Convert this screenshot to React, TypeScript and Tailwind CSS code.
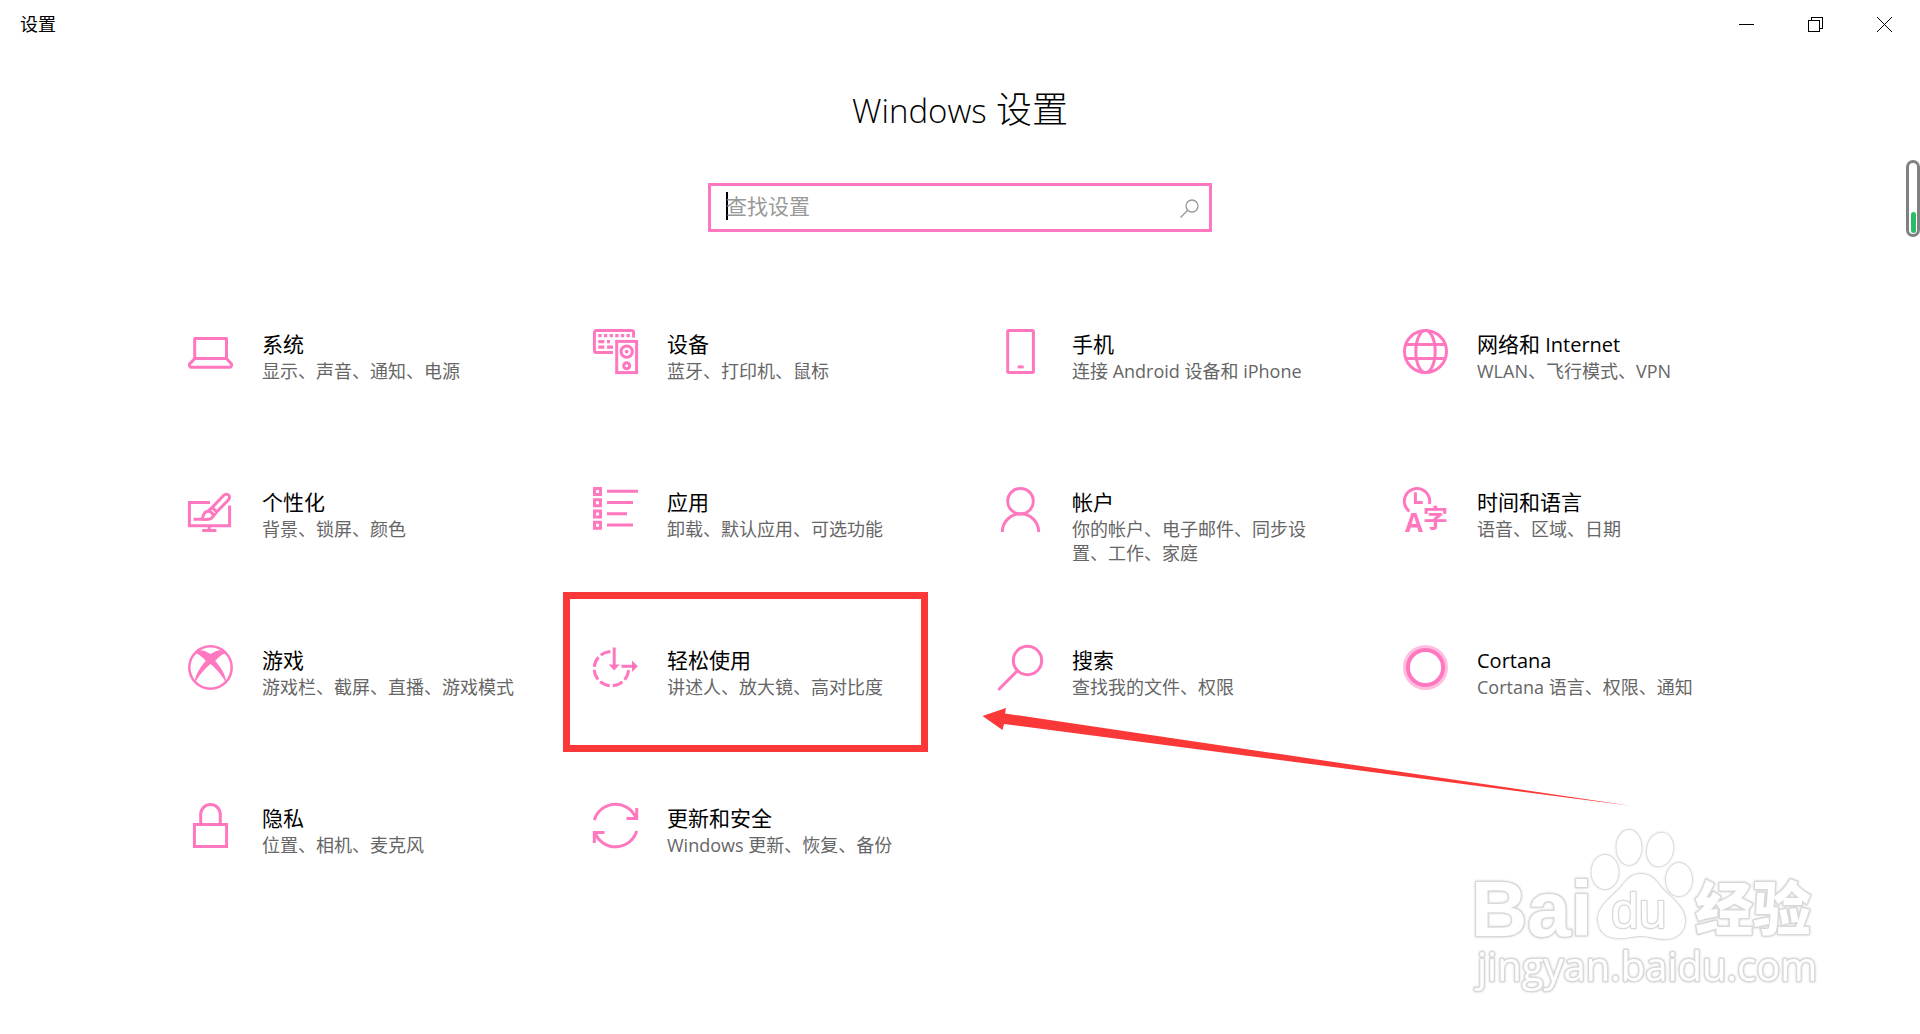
import type { ReactNode } from 'react';

type Category = {
  title: string;
  latin?: string;
  description: string;
  icon: ReactNode;
  highlighted?: boolean;
};

function TileIcon({ children }: { children: ReactNode }) {
  return (
    <svg
      viewBox="0 0 45 45"
      className="size-[45px] shrink-0 overflow-visible text-[#ff77bf]"
      fill="none"
      stroke="currentColor"
      strokeWidth="3"
      aria-hidden="true"
    >
      {children}
    </svg>
  );
}

const categories: Category[] = [
  {
    title: '系统',
    description: '显示、声音、通知、电源',
    icon: (
      <path d="M6.7 29.6V9.4h31.8v20.2M6.7 29.6h31.8l5 5.4c.4 2-.6 3.3-2 3.3H3.5c-1.4 0-2.4-1.3-2-3.3z" strokeLinejoin="round" />
    ),
  },
  {
    title: '设备',
    description: '蓝牙、打印机、鼠标',
    icon: (
      <>
        <path d="M20 23.6H3.4a2 2 0 0 1-2-2V3.4a2 2 0 0 1 2-2h35.2a2 2 0 0 1 2 2v5.1" />
        <path d="M5.3 6.7h32" strokeWidth="3.2" strokeDasharray="3.3 2.35" />
        <path d="M5.3 12.7h6M14 12.7h3M5.3 18.2h6M14 18.2h6" strokeWidth="3.2" />
        <rect x="23.7" y="12.4" width="19.9" height="31.2" />
        <circle cx="33.7" cy="22.6" r="5.7" />
        <circle cx="33.7" cy="22.6" r="1.9" fill="currentColor" stroke="none" />
        <circle cx="33.7" cy="36.7" r="3" />
      </>
    ),
  },
  {
    title: '手机',
    description: '连接 Android 设备和 iPhone',
    icon: (
      <>
        <rect x="9.7" y="1.4" width="25.7" height="42.2" rx="1" />
        <path d="M19.7 37.9h6" />
      </>
    ),
  },
  {
    title: '网络和',
    latin: 'Internet',
    description: 'WLAN、飞行模式、VPN',
    icon: (
      <>
        <circle cx="22.5" cy="22.5" r="21" />
        <ellipse cx="22.5" cy="22.5" rx="9.7" ry="21" />
        <path d="M2.5 15.4h40M2.5 29.5h40" />
      </>
    ),
  },
  {
    title: '个性化',
    description: '背景、锁屏、颜色',
    icon: (
      <>
        <path d="M22 15.4H1.4v23.4h40.2V18.5M21.2 39v5M14.2 43.6h14.2" />
        <path d="M24.2 20.4 35.8 8.2a3.3 3.3 0 0 1 4.8 4.6L28.6 25M24.2 20.4l4.4 4.6M24.2 20.4l-4 3.6M28.6 25l-3.4 4.2" />
        <path d="M5.5 32.3h8.2c1.5-1.6 1.3-6.2 4.6-7.6 4-1.4 7.4 1.8 6.6 4.8-1 3.2-5.4 3.4-11.2 2.8" />
      </>
    ),
  },
  {
    title: '应用',
    description: '卸载、默认应用、可选功能',
    icon: (
      <>
        <path d="M1.5 1.5h6v6h-6zM1.5 12.7h6v6h-6zM1.5 24h6v6h-6zM1.5 35.2h6v6h-6z" />
        <path d="M14 4.3h31M14 15.5h26M14 26.8h20M14 38h26" />
      </>
    ),
  },
  {
    title: '帐户',
    description: '你的帐户、电子邮件、同步设置、工作、家庭',
    icon: (
      <>
        <circle cx="22.5" cy="14.2" r="12.8" />
        <path d="M4.3 45a18.2 18.2 0 0 1 36.4 0" />
      </>
    ),
  },
  {
    title: '时间和语言',
    description: '语音、区域、日期',
    icon: (
      <>
        <path d="M6.4 24.4A12.7 12.7 0 1 1 26.4 17" />
        <path d="M12.4 5.3v10.2h7.4" />
        <g
          fill="currentColor"
          stroke="none"
          className="font-['Open_Sans','Noto_Sans_CJK_SC',sans-serif] font-bold"
        >
          <text x="2" y="45" fontSize="26">A</text>
          <text x="20" y="40" fontSize="25">字</text>
        </g>
      </>
    ),
  },
  {
    title: '游戏',
    description: '游戏栏、截屏、直播、游戏模式',
    icon: (
      <>
        <circle cx="22.5" cy="22.5" r="21.2" strokeWidth="2.5" />
        <path
          d="M7 37.5C6.5 31 13 21 17.8 15.800 14.5 12 11 9 7.5 8.2 9 6 12 5 14.500 5.5c3 .5 5.5 2 8 3.6 2.5-1.6 5-3.1 8-3.6C33 5 36 6 37.5 8.2 34 9 30.5 12 27.2 15.8 32 21 38.5 31 38 37.5 34 30.5 28 23.5 22.5 19 17 23.5 11 30.5 7 37.5z"
          fill="currentColor"
          stroke="none"
        />
      </>
    ),
  },
  {
    title: '轻松使用',
    description: '讲述人、放大镜、高对比度',
    highlighted: true,
    icon: (
      <>
        <path
          d="M35.6 23.6A17.2 17.2 0 1 1 18.4 6.4"
          strokeDasharray="10.5 3"
          strokeDashoffset="-1.5"
        />
        <path d="M21.2 2.5V21M28.5 21.2H40" />
        <path d="M15.7 19.5h11l-5.5 6zM39 15.4v11.6l6-5.8z" fill="currentColor" stroke="none" />
      </>
    ),
  },
  {
    title: '搜索',
    description: '查找我的文件、权限',
    icon: (
      <>
        <circle cx="29.5" cy="15.5" r="14.2" />
        <path d="M19.5 25.5 1.2 44" strokeLinecap="round" />
      </>
    ),
  },
  {
    title: '',
    latin: 'Cortana',
    description: 'Cortana 语言、权限、通知',
    icon: (
      <>
        <circle cx="22.5" cy="22.5" r="20.8" strokeWidth="3.4" stroke="#ffbde0" />
        <circle cx="22.5" cy="22.5" r="17.6" strokeWidth="4" />
      </>
    ),
  },
  {
    title: '隐私',
    description: '位置、相机、麦克风',
    icon: <path d="M6.4 21.4h32.2v22.2H6.4zM12.7 21V11.3a9.8 9.8 0 0 1 19.6 0V21" />,
  },
  {
    title: '更新和安全',
    description: 'Windows 更新、恢复、备份',
    icon: (
      <>
        <path d="M1.3 17A22 22 0 0 1 43 15.4M43.7 5v10.6H33.5" />
        <path d="M43.7 28A22 22 0 0 1 2 29.6M1.3 40V29.4H11.5" />
      </>
    ),
  },
];

function TitleBar() {
  const button = 'flex h-12 w-[69px] items-center justify-center hover:bg-gray-100';
  return (
    <header className="flex h-12 items-center justify-between pr-px pl-5">
      <span className="text-lg leading-6">设置</span>
      <div className="flex">
        <button type="button" aria-label="最小化" className={button}>
          <svg width="15" height="15" stroke="black" shapeRendering="crispEdges">
            <path d="M0 7.5h15" />
          </svg>
        </button>
        <button type="button" aria-label="还原" className={button}>
          <svg width="15" height="15" fill="none" stroke="black" shapeRendering="crispEdges">
            <path d="M.5 3.5h11v11H.5zM3.5 3.5v-3h11v11h-3" />
          </svg>
        </button>
        <button type="button" aria-label="关闭" className={button}>
          <svg width="15" height="15" stroke="black">
            <path d="m0 0 15 15M15 0 0 15" />
          </svg>
        </button>
      </div>
    </header>
  );
}

function SearchBox() {
  return (
    <label className="mx-auto mt-[49px] flex h-[49px] w-[504px] max-w-full items-center border-3 border-[#ff77bf] pr-[10px] pb-[3px] pl-[15px]">
      <span className="h-7 w-0.5 shrink-0 bg-black" />
      <input
        type="text"
        aria-label="查找设置"
        placeholder="查找设置"
        className="-ml-0.5 min-w-0 flex-1 bg-transparent text-[21px] leading-7 outline-none placeholder:text-[#999999]"
      />
      <svg viewBox="0 0 19 19" className="mt-1 size-[19px]" fill="none" stroke="#999999" strokeWidth="1.3" aria-hidden="true">
        <circle cx="12" cy="7" r="6" />
        <path d="M7.7 11.3.5 18.5" />
      </svg>
    </label>
  );
}

function CategoryTile({ title, latin, description, icon, highlighted }: Category) {
  return (
    <a href="#" className="relative flex h-[158px] gap-[29px] pt-[52px] pr-8 pl-[38px]">
      <TileIcon>{icon}</TileIcon>
      <span className="flex min-w-0 flex-col">
        <span className="text-[21px] leading-[30px]">
          {title}
          {latin && <span className="text-xl leading-none">{title ? ` ${latin}` : latin}</span>}
        </span>
        <span className="text-lg leading-6 text-[#666666]">{description}</span>
      </span>
      {highlighted && (
        <span className="pointer-events-none absolute -inset-y-px right-8 left-2 border-7 border-[#fb3838]" />
      )}
    </a>
  );
}

function Arrow() {
  return (
    <svg
      width="650"
      height="100"
      viewBox="0 0 650 100"
      className="pointer-events-none absolute top-[430px] left-[832px]"
      aria-hidden="true"
    >
      <path d="M.5 9 24 1l-1 5.5L650 99 22 17l-1.5 6z" fill="#fb3838" />
    </svg>
  );
}

function Watermark() {
  return (
    <svg
      width="360"
      height="180"
      viewBox="0 0 360 180"
      className="pointer-events-none absolute right-[90px] bottom-[34px] drop-shadow-[0_0_1px_#d4d4d4]"
      fill="white"
      stroke="#d8d8d8"
      strokeWidth="2.6"
      strokeLinejoin="round"
      role="img"
      aria-label="Baidu 经验"
    >
      <g style={{ paintOrder: 'stroke' }}>
        <text x="1" y="116" fontSize="78" className="font-['Liberation_Sans',sans-serif] font-bold">Bai</text>
        <g strokeWidth="1.5">
          <ellipse cx="135" cy="52" rx="13.5" ry="17" />
          <ellipse cx="159" cy="27.5" rx="12.5" ry="17.5" />
          <ellipse cx="190" cy="29.5" rx="13" ry="17" transform="rotate(12 190 29.5)" />
          <ellipse cx="209" cy="59.5" rx="13" ry="16.5" />
          <path d="M171 54c9 0 14 5 19 12 7 9 25 20 25 34 0 12-8 19-20 19-9 0-16-3-24-3s-14 3-23 2c-12 0-20-7-20-19 0-14 17-24 24-33 5-7 10-12 19-12z" />
        </g>
        <text x="141" y="108" fontSize="50" className="font-['Liberation_Sans',sans-serif]">du</text>
        <text x="225" y="110" fontSize="58" className="font-['Noto_Sans_CJK_SC',sans-serif] font-black">经验</text>
        <text x="7" y="161" fontSize="40" className="font-['Open_Sans',sans-serif]">jingyan.baidu.com</text>
      </g>
    </svg>
  );
}

export default function App() {
  return (
    <div className="relative min-h-screen overflow-hidden bg-white font-['Open_Sans','Noto_Sans_CJK_SC',sans-serif] text-black">
      <TitleBar />
      <main>
        <h1 className="mt-[38px] text-center text-4xl leading-12 font-light">
          <span className="text-[33px] leading-none">Windows</span> 设置
        </h1>
        <SearchBox />
        <nav className="relative mx-auto mt-[45px] grid max-w-[1620px] grid-cols-4" aria-label="设置类别">
          {categories.map((category) => (
            <CategoryTile key={category.description} {...category} />
          ))}
          <Arrow />
        </nav>
      </main>
      <div className="absolute top-40 right-0 flex h-[77px] w-[14px] items-end justify-center rounded-full border-3 border-[#808080] pb-px">
        <span className="h-[21px] w-[5px] rounded-full bg-[#27bd64]" />
      </div>
      <Watermark />
    </div>
  );
}
